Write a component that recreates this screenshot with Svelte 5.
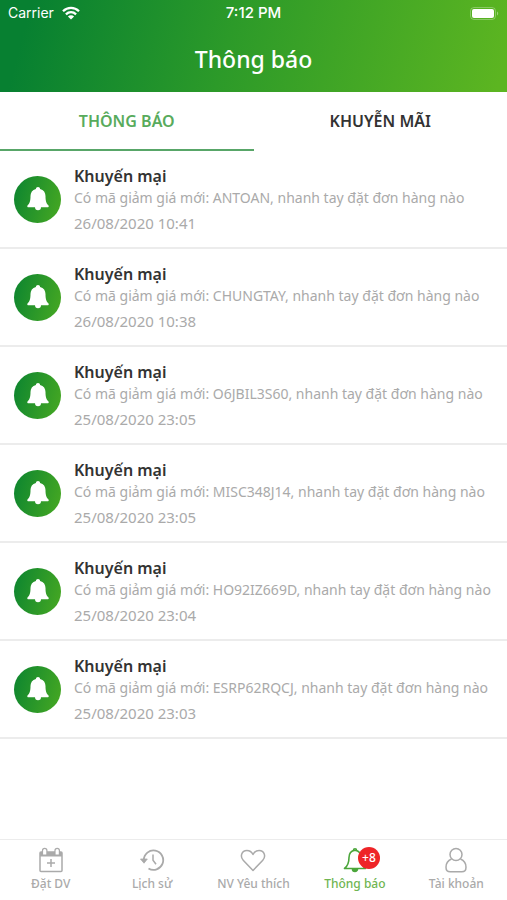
<script>
  const notices = [
    { code: 'ANTOAN', time: '26/08/2020 10:41' },
    { code: 'CHUNGTAY', time: '26/08/2020 10:38' },
    { code: 'O6JBIL3S60', time: '25/08/2020 23:05' },
    { code: 'MISC348J14', time: '25/08/2020 23:05' },
    { code: 'HO92IZ669D', time: '25/08/2020 23:04' },
    { code: 'ESRP62RQCJ', time: '25/08/2020 23:03' },
  ];
  const tabs = ['THÔNG BÁO', 'KHUYỄN MÃI'];
  let active = $state(0);
</script>

<div class="app">
  <header>
    <div class="status">
      <span class="carrier">
        Carrier
        <svg width="18" height="14" viewBox="0 0 18 14" fill="none" stroke="#fff" stroke-width="2.3" aria-hidden="true">
          <path d="M1 5.2C5.6.7 12.4.7 17 5.2" />
          <path d="M3.9 8.3c3-2.8 7.200-2.800 10.200 0" />
          <path d="M9 13.600 5.900 10.500a4.400 4.400 0 0 1 6.200 0z" fill="#fff" stroke="none" />
        </svg>
      </span>
      <span class="clock">7:12 PM</span>
      <span class="power">
        <svg width="29" height="13" viewBox="0 0 29 13" aria-hidden="true">
          <rect x=".5" y=".5" width="25" height="12" rx="3.500" fill="none" stroke="#fff" stroke-opacity=".3" />
          <rect x="2" y="2" width="22" height="9" rx="2" fill="#fff" />
          <path d="M27 4.500c1.600.6 1.600 3.400 0 4z" fill="#fff" fill-opacity=".4" />
        </svg>
      </span>
    </div>
    <h1>Thông báo</h1>
  </header>

  <div class="tabs" role="tablist">
    {#each tabs as tab, i}
      <button role="tab" aria-selected={active === i} class:active={active === i} onclick={() => (active = i)}>{tab}</button>
    {/each}
  </div>

  <main>
    <ul>
      {#each notices as n}
        <li>
          <span class="disc">
            <svg width="22" height="24" viewBox="0 0 22 24" fill="#fff" aria-hidden="true">
              <path d="M11 0c1.200 0 2.100.8 2.100 1.900 3.600.9 5.400 3.600 5.400 7.100 0 5 .8 7.300 2.800 9.300.8.8.4 1.900-.7 1.900H1.400c-1.100 0-1.500-1.100-.7-1.900C2.700 16.300 3.500 14 3.500 9c0-3.500 1.800-6.200 5.400-7.100C8.900.8 9.800 0 11 0z" />
              <path d="M8 20h6a3 3.300 0 0 1-6 0z" />
            </svg>
          </span>
          <div class="body">
            <h2>Khuyến mại</h2>
            <p>Có mã giảm giá mới: {n.code}, nhanh tay đặt đơn hàng nào</p>
            <time>{n.time}</time>
          </div>
        </li>
      {/each}
    </ul>
  </main>

  <nav>
    <a href="#book">
      <svg width="26" height="26" viewBox="0 0 26 26" fill="none" stroke="#aaa" stroke-width="1.500" aria-hidden="true">
        <rect x="2" y="5" width="22" height="19.500" rx="1" />
        <path d="M2 5h22v4.500H2z" fill="#aaa" stroke="none" />
        <path d="M13 12v8M9 16h8" />
        <path d="M4.500 8V3.500a2.200 2.200 0 0 1 4.400 0V8zM17 8V3.500a2.200 2.200 0 0 1 4.400 0V8z" fill="#fff" stroke-width="1.200" />
      </svg>
      <span>Đặt DV</span>
    </a>
    <a href="#history">
      <svg width="26" height="26" viewBox="0 0 26 26" fill="none" stroke="#aaa" stroke-width="1.800" aria-hidden="true">
        <path d="M4.800 13A9.700 9.700 0 1 1 9.500 21.500" />
        <path d="M1.500 12h6.800l-3.300 4.200z" fill="#aaa" stroke-width=".8" />
        <path d="M14 7.500v5.700l3 4" stroke-width="1.500" />
      </svg>
      <span>Lịch sử</span>
    </a>
    <a href="#favourites">
      <svg width="26" height="26" viewBox="0 0 26 26" fill="none" stroke="#aaa" stroke-width="1.500" stroke-linejoin="round" aria-hidden="true">
        <path d="M13 23.500 3.200 13.200C-.2 9.500 1.500 3.500 6.900 3.500c2.800 0 4.900 1.600 6.100 4 1.200-2.400 3.300-4 6.100-4 5.400 0 7.100 6 3.700 9.700z" />
      </svg>
      <span>NV Yêu thích</span>
    </a>
    <a href="#notices" class="current" aria-current="page">
      <svg width="26" height="26" viewBox="0 0 26 26" fill="none" stroke="#4ba63b" stroke-width="1.600" stroke-linejoin="round" aria-hidden="true">
        <path d="M13 3.200C8.800 3.800 7 6.500 7 10.500c0 5.500-1.300 8.500-4.500 11h21c-3.200-2.500-4.500-5.500-4.500-11 0-4-1.800-6.700-6-7.300z" />
        <path d="M11.500 3.200a1.500 1.500 0 0 1 3 0" />
        <path d="M10.500 22h5a2.500 2.500 0 0 1-5 0z" fill="#4ba63b" />
      </svg>
      <b class="badge">+8</b>
      <span>Thông báo</span>
    </a>
    <a href="#account">
      <svg width="26" height="26" viewBox="0 0 26 26" fill="none" stroke="#aaa" stroke-width="1.500" aria-hidden="true">
        <circle cx="13" cy="7.500" r="6" />
        <path d="M8.500 12C5 13.400 3 16.200 3 20.200c0 2.900 1.500 4.600 4.200 4.600h11.600c2.700 0 4.200-1.700 4.200-4.600 0-4-2-6.800-5.500-8.200" />
      </svg>
      <span>Tài khoản</span>
    </a>
  </nav>
</div>

<style>
  :global(body) {
    margin: 0;
    background: #fff;
  }
  .app {
    display: flex;
    flex-direction: column;
    min-height: 100vh;
    font-family: 'Noto Sans', 'Open Sans', sans-serif;
    color: #333;
  }
  header {
    color: #fff;
    background: linear-gradient(105deg, #078031 6%, #2c9a29 45%, #5cb521 98%);
  }
  .status {
    display: grid;
    grid-template-columns: 1fr auto 1fr;
    align-items: center;
    height: 26px;
    padding: 0 8px;
    font: 14px/26px Inter, sans-serif;
  }
  .carrier {
    display: flex;
    align-items: center;
    gap: 8px;
  }
  .clock {
    font-size: 15px;
    font-weight: 500;
  }
  .power {
    display: flex;
    justify-content: flex-end;
  }
  h1 {
    margin: 0;
    font-size: 23px;
    font-weight: 500;
    line-height: 66px;
    text-align: center;
  }
  .tabs {
    display: grid;
    grid-template-columns: 1fr 1fr;
  }
  .tabs button {
    height: 59px;
    padding: 0;
    border: 0;
    border-bottom: 2px solid transparent;
    background: none;
    font: 600 16px/20px 'Noto Sans', 'Open Sans', sans-serif;
    color: #333;
  }
  .tabs .active {
    border-color: #58a668;
    color: #58ab5c;
  }
  main {
    flex: 1;
  }
  ul {
    margin: 0;
    padding: 0;
    list-style: none;
  }
  li {
    display: flex;
    align-items: center;
    gap: 13px;
    box-sizing: border-box;
    height: 98px;
    padding: 0 14px;
    border-bottom: 2px solid #ececec;
  }
  .disc {
    display: grid;
    place-items: center;
    flex: none;
    width: 47px;
    height: 47px;
    border-radius: 50%;
    background: linear-gradient(105deg, #0b8430, #48a922);
  }
  .body {
    min-width: 0;
  }
  h2 {
    margin: 0;
    font-size: 16px;
    font-weight: 600;
    line-height: 22px;
  }
  p,
  time {
    display: block;
    margin: 0;
    font-size: 14px;
    line-height: 22px;
    color: #aaa;
    white-space: nowrap;
  }
  time {
    margin-top: 3px;
    font-size: 15px;
  }
  nav {
    display: grid;
    grid-template-columns: repeat(5, 1fr);
    box-sizing: border-box;
    height: 61px;
    border-top: 1px solid #ececec;
  }
  nav a {
    position: relative;
    display: flex;
    flex-direction: column;
    align-items: center;
    padding-top: 7px;
    font-size: 12px;
    font-weight: 500;
    line-height: 22px;
    color: #aaa;
    text-decoration: none;
  }
  nav .current {
    color: #6fb552;
  }
  .badge {
    position: absolute;
    top: 7px;
    left: calc(50% + 3px);
    width: 22px;
    height: 22px;
    border-radius: 50%;
    background: #ee2427;
    color: #fff;
    font-size: 12px;
    font-weight: 500;
    line-height: 22px;
    text-align: center;
  }
</style>
